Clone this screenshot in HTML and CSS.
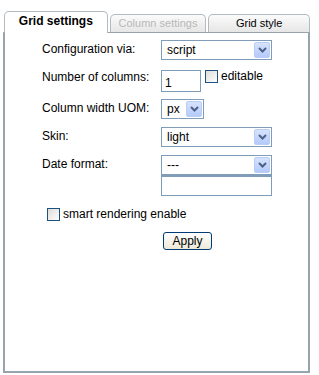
FILE: index.html
```
<!DOCTYPE html>
<html lang="en">
<head>
    <meta charset="UTF-8">
    <meta name="viewport" content="width=device-width, initial-scale=1.0">
    <title>Grid settings</title>
    <link rel="stylesheet" href="styles.css">
</head>
<body>

    <div class="tabbar">
        <div class="tab active">Grid settings</div>
        <div class="tab disabled">Column settings</div>
        <div class="tab">Grid style</div>
    </div>

    <div class="panel">
        <div class="row r1">
            <label>Configuration via:</label>
            <div class="select wide"><span>script</span><span class="arrow"><svg width="9" height="6" viewBox="0 0 9 6"><path d="M1 1l3.5 3.5L8 1" fill="none" stroke="#4d6185" stroke-width="2"/></svg></span></div>
        </div>
        <div class="row r2">
            <label>Number of columns:</label>
            <div class="input small">1</div>
            <span class="check"></span>
            <span class="check-label">editable</span>
        </div>
        <div class="row r3">
            <label>Column width UOM:</label>
            <div class="select narrow"><span>px</span><span class="arrow"><svg width="9" height="6" viewBox="0 0 9 6"><path d="M1 1l3.5 3.5L8 1" fill="none" stroke="#4d6185" stroke-width="2"/></svg></span></div>
        </div>
        <div class="row r4">
            <label>Skin:</label>
            <div class="select wide"><span>light</span><span class="arrow"><svg width="9" height="6" viewBox="0 0 9 6"><path d="M1 1l3.5 3.5L8 1" fill="none" stroke="#4d6185" stroke-width="2"/></svg></span></div>
        </div>
        <div class="row r5">
            <label>Date format:</label>
            <div class="stack">
                <div class="select wide"><span>---</span><span class="arrow"><svg width="9" height="6" viewBox="0 0 9 6"><path d="M1 1l3.5 3.5L8 1" fill="none" stroke="#4d6185" stroke-width="2"/></svg></span></div>
                <div class="input wide tall"></div>
            </div>
        </div>
        <div class="smart">
            <span class="check"></span>
            <span class="check-label">smart rendering enable</span>
        </div>
        <div class="actions">
            <button type="button">Apply</button>
        </div>
    </div>

</body>
</html>
```

FILE: styles.css
```
body {
    font-family: "Liberation Sans", Arial, sans-serif;
    font-size: 12px;
    color: #000;
    background-color: #fff;
    margin: 0;
    padding: 11px 0 0 3px;
}

.tabbar {
    display: flex;
    align-items: flex-end;
    width: 307px;
    height: 21px;
    position: relative;
    z-index: 1;
}

.tab {
    box-sizing: border-box;
    height: 18px;
    margin-right: 2px;
    border: 1px solid #b3bac0;
    border-bottom: none;
    border-radius: 5px 5px 0 0;
    background: linear-gradient(#fbfbfb, #e6e6e6);
    font-size: 11px;
    line-height: 16px;
    text-align: center;
    width: 97px;
}

.tab.active {
    width: 104px;
    height: 22px;
    margin-left: 1px;
    margin-bottom: -1px;
    background: #fff;
    border-color: #b3bac0;
    font-weight: bold;
    font-size: 12px;
    line-height: 19px;
}

.tab.disabled {
    color: #b8b8b8;
}

.tab:last-child {
    width: 102px;
    margin-right: 0;
}

.panel {
    box-sizing: border-box;
    width: 307px;
    height: 341px;
    border: 1px solid #97a4ad;
    border-width: 1px 2px 2px 2px;
    padding: 7px 0 0 37px;
}

.row {
    display: flex;
    align-items: flex-start;
}

.row label {
    width: 119px;
    flex-shrink: 0;
    line-height: 18px;
}

.r1 { height: 20px; margin-bottom: 10px; }
.r2 { height: 22px; margin-bottom: 7px; }
.r3 { height: 21px; margin-bottom: 7px; }
.r4 { height: 21px; margin-bottom: 7px; }
.r5 { height: 42px; margin-bottom: 10px; }

.r2 label { line-height: 14px; padding-top: 0; }

.select {
    box-sizing: border-box;
    height: 20px;
    border: 1px solid #7f9db9;
    background: #fff;
    display: flex;
    align-items: center;
    justify-content: space-between;
    padding: 0 1px 0 5px;
}

.select.wide { width: 111px; }
.select.narrow { width: 43px; }

.arrow {
    box-sizing: border-box;
    width: 16px;
    height: 16px;
    border: 1px solid #b9cdf5;
    border-radius: 2px;
    background: linear-gradient(#d7e3fd, #b4cafa);
    display: flex;
    align-items: center;
    justify-content: center;
}

.input {
    box-sizing: border-box;
    height: 22px;
    border: 1px solid #7f9db9;
    background: #fff;
    padding: 5px 0 0 3px;
}

.input.small { width: 40px; }
.input.wide { width: 111px; }
.input.tall { height: 21px; border-top-width: 2px; }

.stack {
    display: flex;
    flex-direction: column;
}

.check {
    box-sizing: border-box;
    display: inline-block;
    width: 13px;
    height: 13px;
    border: 1px solid #1c5180;
    background: linear-gradient(135deg, #dcdcd7, #fff);
    flex-shrink: 0;
}

.r2 .check {
    margin-left: 4px;
}

.check-label {
    margin-left: 3px;
    line-height: 12px;
}

.smart {
    display: flex;
    align-items: center;
    margin-left: 5px;
    height: 14px;
    margin-bottom: 11px;
}

.smart .check-label {
    line-height: 14px;
}

.actions {
    padding-left: 121px;
}

button {
    font-family: "Liberation Sans", Arial, sans-serif;
    font-size: 12px;
    color: #000;
    width: 49px;
    height: 18px;
    padding: 0;
    border: 1px solid #003c74;
    border-radius: 3px;
    background: linear-gradient(#fff, #ece9d8);
    cursor: pointer;
}
```
